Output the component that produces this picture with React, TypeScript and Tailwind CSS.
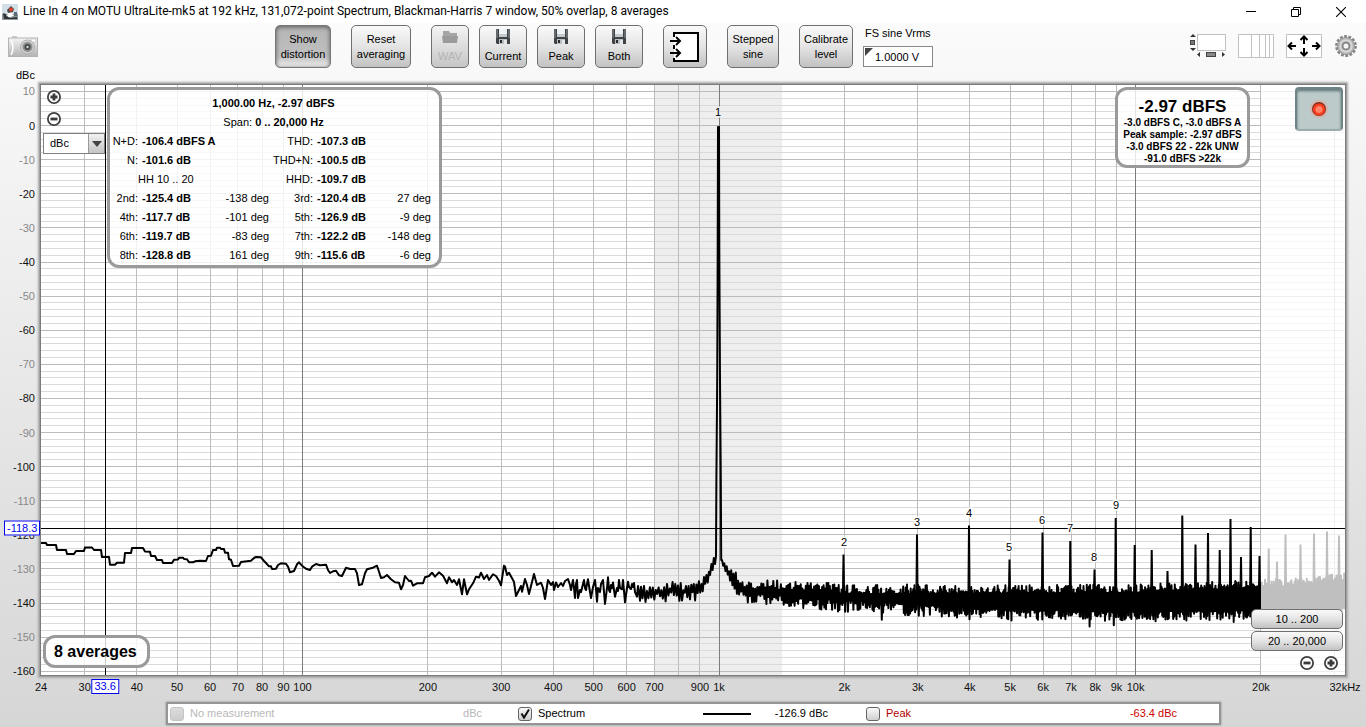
import type { ReactNode } from 'react';

const F_MIN = 23.56;
const F_MAX = 31830;
const DB_TOP = 11.9;
const DB_BOTTOM = -161.1;

// Trace data is kept in plot units: x 41..1345, y 85..675
const PLOT = { x: 41, y: 85, w: 1304, h: 590 };

const freqPct = (f: number) => `${(Math.log(f / F_MIN) / Math.log(F_MAX / F_MIN)) * 100}%`;
const dbPct = (db: number) => `${((DB_TOP - db) / (DB_TOP - DB_BOTTOM)) * 100}%`;
const xPct = (x: number) => `${((x - PLOT.x) / PLOT.w) * 100}%`;
const yPct = (y: number) => `${((y - PLOT.y) / PLOT.h) * 100}%`;

const CURSOR = { freq: 33.6, db: -118.1 };

const FREQ_LINES = [
  30, 40, 50, 60, 70, 80, 90, 100, 200, 300, 400, 500, 600, 700, 800, 900, 1000, 2000, 3000, 4000, 5000, 6000, 7000,
  8000, 9000, 10000, 20000, 30000,
];

const FREQ_LABELS: [number, string][] = [
  [F_MIN, '24'], [30, '30'], [40, '40'], [50, '50'], [60, '60'], [70, '70'], [80, '80'], [90, '90'], [100, '100'],
  [200, '200'], [300, '300'], [400, '400'], [500, '500'], [600, '600'], [700, '700'], [900, '900'], [1000, '1k'],
  [2000, '2k'], [3000, '3k'], [4000, '4k'], [5000, '5k'], [6000, '6k'], [7000, '7k'], [8000, '8k'], [9000, '9k'],
  [10000, '10k'], [20000, '20k'], [F_MAX, '32kHz'],
];

const DB_LINES = Array.from({ length: 86 }, (_, i) => 10 - i * 2);
const DB_LABELS = Array.from({ length: 18 }, (_, i) => 10 - i * 10);

const HARMONIC_LABELS: [number, number, string][] = [
  [718, 116, '1'], [844, 546, '2'], [917, 526, '3'], [969, 517, '4'], [1009, 551, '5'], [1042, 524, '6'],
  [1070, 532, '7'], [1094, 561, '8'], [1116, 509, '9'],
];

// Low end of the spectrum, up to about 640 Hz
const LOW_TRACE =
  '41,543 46,543 47,545 56,545 57,550 66,550 67,554 74,554 76,551 84,551 85,547.5 92,547.5 94,550 101,550 102,557 109,557 ' +
  '110,564.7 115,564.7 117,562.7 124,562.7 125,553 131,553 132,548 143,548 145,551.5 150,551.7 151,556 155,556 157,560 ' +
  '162,560 163,563 172,563 174,559.7 178,559.5 179,557.7 183,557.7 184,559 187,559.3 189,562.3 193,562.3 195,561.3 ' +
  '200,560.7 206,561 208,556 211,555.7 213,550 216,550 217,547.7 220,547.7 221,549 224,549 225,552.7 228,552.7 229,559.3 ' +
  '231,559.7 233,566 239,565.7 241,562 245,561.5 251,560.7 254,558 256,557 261,557.3 264,561 266,563 269,566.3 271,566.3 ' +
  '272,569 276,568.7 278,565 281,563.3 286,563.7 288,566.7 290,572.3 294,571 297,564.3 299,562.3 302,565.7 306,568.7 ' +
  '310,570 312,566.7 316,564 320,565.3 326,564.7 328,570 330,573 333,571.3 336,570.7 339,575.3 342,576 346,567.7 350,569 ' +
  '355,569 357,573.3 359,585 362,584.3 365,573.3 367,569.3 373,567.7 377,565.7 379,571.7 381,578 384,577.3 387,575 ' +
  '391,579.3 395,582.3 399,582.7 401,589.3 403,585 405,576 409,581 411,580.7 413,585.7 417,583.3 423,583.3 425,577.3 ' +
  '429,576 432,572.7 435,576.7 439,572.3 443,575.7 447,583.3 449,577.3 452,582.3 454,580 457,585 459,579.3 462,594.3 ' +
  '464,579.3 467,594.3 469,589.3 473,583.3 476,576.7 479,577.5 481,572.7 484,579 487,575 489,580 493,574.3 496,576 ' +
  '499,580.7 501,585.3 504,565.7 505,566.5 507,575 509,572.7 513,580 514,582 516,596 521,586 522,591.7 525,579 527,585 ' +
  '529,594 534,574 537,585 541,582.7 543,588 545,599 548,580 551,585 553,582 554,590 556,582.5 558,587 561,583 563,586 ' +
  '565,581 568,579 570,585 571,590 573,580 574,588 575,598 576,584 577,580 578,598 580,590 581,592 583,584 584,580 ' +
  '585,588 586,590 587,584 588,579.3 590,592 591,598 593,587 595,580 596,589 597,601.7 598,588 600,592 601,584 603,580 ' +
  '604,592 605,604 607,588 608,577.3 609,590 610,592 611,585 612,588 613,582.5 614,590 615,596.7 617,588 618,591 ' +
  '619,580 620,588 622,589.3 623,580 624,591 625,602.3 627,588 628,581.7 629,587 631,589 632,584 633,587 634,583 ' +
  '635,592 637,596.7 638,586 639,592 640,600.7';

const SPIKES: [number, number][] = [
  [843.5, 555], [917, 535], [969, 526], [1009.5, 560], [1042.5, 533], [1070.3, 541.5], [1094.5, 570], [1115.7, 518.5],
  [1134.7, 545.5], [1151.7, 550.5], [1167.5, 571.5], [1182.3, 516], [1195.5, 545], [1208, 533.5], [1219.7, 550.5],
  [1230.5, 519.5], [1241, 557.5], [1250.7, 527.5], [1259.5, 556.5], [1268.7, 549], [1277, 562], [1285.5, 535],
  [1300.5, 545], [1314, 534], [1327, 532], [1339, 536],
];

function noise(seed: number) {
  let s = seed;
  return () => {
    s = (s + 0x6d2b79f5) | 0;
    let t = Math.imul(s ^ (s >>> 15), 1 | s);
    t = (t + Math.imul(t ^ (t >>> 7), 61 | t)) ^ t;
    return ((t ^ (t >>> 14)) >>> 0) / 4294967296;
  };
}

function lerp(stops: [number, number][], x: number) {
  for (let i = 1; i < stops.length; i++) {
    const [x0, y0] = stops[i - 1];
    const [x1, y1] = stops[i];
    if (x <= x1) return y0 + ((y1 - y0) * (x - x0)) / (x1 - x0);
  }
  return stops[stops.length - 1][1];
}

const FLOOR_MID: [number, number][] = [
  [640, 592], [692, 591], [702, 587], [708, 577], [715, 560], [722, 562], [727, 570], [735, 581], [742, 590], [790, 593],
  [845, 597], [980, 601], [1130, 602], [1260, 599], [1310, 597], [1345, 594],
];
// Half height of the part that is always filled, and how far peaks reach past it
const FLOOR_CORE: [number, number][] = [
  [640, 0], [845, 3], [980, 7], [1130, 9], [1260, 11], [1345, 13],
];
const FLOOR_REACH: [number, number][] = [
  [640, 12], [698, 10], [712, 5], [724, 5], [740, 12], [845, 12], [980, 11], [1345, 9],
];
const FLOOR_STEP: [number, number][] = [
  [640, 1.5], [715, 1.2], [790, 0.9], [845, 0.7], [980, 0.55],
];

function buildNoiseFloor(from: number, to: number, seed: number) {
  const rnd = noise(seed);
  const pts: string[] = [];
  let side = -1;
  for (let x = from; x < to; x += lerp(FLOOR_STEP, x)) {
    const r = Math.pow(rnd(), x < 845 ? 1 : 1.6);
    const far = side > 0 && rnd() > 0.975 ? 3 + rnd() * 7 : 0;
    const reach = lerp(FLOOR_CORE, x) + r * lerp(FLOOR_REACH, x) * (side > 0 ? 1 : 0.85) + far;
    pts.push(`${x.toFixed(1)},${(lerp(FLOOR_MID, x) + side * reach).toFixed(1)}`);
    side = -side;
  }
  return pts.join(' ');
}

const PEAK = '716,556 716.4,480 717.2,380 717.7,250 718,127 719,127 719.3,250 720,380 720.8,480 721.2,560';
const TRACE = `${LOW_TRACE} ${buildNoiseFloor(641, 715, 11)} ${PEAK} ${buildNoiseFloor(722, 1346, 29)}`;

const buttonBase =
  'shrink-0 rounded-[5px] border border-[#6f6f6f] bg-gradient-to-b from-[#fafafa] via-[#e4e4e4] to-[#c2c2c2] text-center text-[11px] leading-[15px] text-black';

function ToolButton({ children, className }: { children: ReactNode; className: string }) {
  return (
    <button type="button" className={`${buttonBase} h-[43px] ${className}`}>
      {children}
    </button>
  );
}

function FloppyIcon() {
  return (
    <svg viewBox="0 0 16 16" className="mx-auto h-4 w-4" aria-hidden="true">
      <path d="M1 0h14v15H2l-1-1z" fill="#3f4346" />
      <path d="M1 0h2v9H1zM13 0h2v9h-2z" fill="#64696d" />
      <rect x="4" y="0" width="8" height="8" fill="#eef2f4" />
      <rect x="4" y="5" width="8" height="3" fill="#c3cbd0" />
      <rect x="4" y="10" width="8" height="5" fill="#b9bec2" />
      <rect x="5" y="11" width="2" height="3" fill="#2c2c2c" />
      <rect x="9" y="11" width="3" height="4" fill="#e4e6e8" />
    </svg>
  );
}

function FolderIcon() {
  return (
    <svg viewBox="0 0 18 16" className="mx-auto h-4 w-[18px]" aria-hidden="true">
      <path d="M2 2h6l1 2h7v9H2z" fill="#a6a6a6" />
      <path d="M1 7h16l-1 7H2z" fill="#9b9b9b" />
    </svg>
  );
}

function ZoomButton({ plus, label }: { plus?: boolean; label: string }) {
  return (
    <button type="button" aria-label={label} className="block h-[14px] w-[14px]">
      <svg viewBox="0 0 14 14" className="h-[14px] w-[14px]">
        <circle cx="7" cy="7" r="6.100" fill="#fff" stroke="#404040" strokeWidth="1.800" />
        <path d={plus ? 'M3.5 7h7M7 3.5v7' : 'M3.5 7h7'} stroke="#3a3a3a" strokeWidth="2.800" />
      </svg>
    </button>
  );
}

function TitleBar() {
  return (
    <header className="flex h-[23px] shrink-0 items-center bg-white pl-[2px]">
      <svg viewBox="0 0 16 16" className="h-4 w-4" aria-hidden="true">
        <rect width="16" height="16" fill="#d3dfe6" />
        <path d="M0 10h16v6H0z" fill="#8b989f" />
        <path d="M5 12 8 4l2 1-1 3 3 4z" fill="#fff" />
        <path d="M5 6 9 2l3 3-1 3-5 1z" fill="#4a4a4a" />
        <circle cx="9" cy="5.500" r="2" fill="#e0402a" />
        <path d="M1 9l3 1v2l4 2 7-1v2H2z" fill="#333" />
        <path d="M12 8h3v4h-3z" fill="#5c6a72" />
        <path d="M6 9h4v4H6z" fill="#fff" />
      </svg>
      <h1 className="ml-[5px] flex-1 truncate font-[Roboto,sans-serif] text-[12px] leading-[23px] font-normal text-black">
        Line In 4 on MOTU UltraLite-mk5 at 192 kHz, 131,072-point Spectrum, Blackman-Harris 7 window, 50% overlap, 8
        averages
      </h1>
      <div className="flex h-full">
        <button type="button" aria-label="Minimize" className="flex w-[45px] items-center justify-center">
          <svg viewBox="0 0 10 10" className="h-[10px] w-[10px]">
            <path d="M0 4.500h10" stroke="#000" />
          </svg>
        </button>
        <button type="button" aria-label="Restore" className="flex w-[45px] items-center justify-center">
          <svg viewBox="0 0 10 10" className="h-[10px] w-[10px]" fill="none" stroke="#000">
            <path d="M.5 2.5h7v7h-7zM2.5 2.5v-2h7v7h-2" />
          </svg>
        </button>
        <button type="button" aria-label="Close" className="flex w-12 items-center justify-center pr-[2px]">
          <svg viewBox="0 0 10 10" className="h-[10px] w-[10px]" fill="none" stroke="#000" strokeWidth="1.1">
            <path d="M0 0l10 10M10 0L0 10" />
          </svg>
        </button>
      </div>
    </header>
  );
}

function Toolbar() {
  return (
    <div className="flex h-[46px] shrink-0 items-start pt-[2px] pr-[9px] pl-2">
      <button type="button" aria-label="Capture image" className="mt-[10px] shrink-0">
        <svg viewBox="0 0 30 23" className="h-[23px] w-[30px]">
          <defs>
            <linearGradient id="body" x1="0" y1="0" x2="0" y2="1">
              <stop offset="0" stopColor="#f4f4f4" />
              <stop offset="1" stopColor="#b4b4b4" />
            </linearGradient>
          </defs>
          <path d="M4 3V1h5v2z" fill="#ccc" />
          <rect x=".5" y="3" width="29" height="18.500" fill="url(#body)" stroke="#b4b4b4" />
          <path d="M3 5q4 8 0 15" fill="none" stroke="#fff" strokeWidth="1.5" />
          <rect x="23" y="4" width="5" height="3" fill="#fff" stroke="#aaa" strokeWidth=".5" />
          <circle cx="19.500" cy="12" r="7" fill="#cfcfcf" stroke="#b0b0b0" />
          <circle cx="19.500" cy="12" r="5" fill="#8f8f8f" />
          <circle cx="19.500" cy="12" r="3" fill="#434848" />
          <circle cx="19.500" cy="12" r="1.200" fill="#cfd6d6" />
        </svg>
      </button>

      <button
        type="button"
        aria-pressed="true"
        className="ml-[237px] h-[43px] w-14 shrink-0 rounded-[5px] border border-[#777] bg-gradient-to-b from-[#b4b4b4] from-0% via-[#c0c0c0] via-75% to-[#f0f0f0] to-100% text-center text-[11px] leading-[15px] text-black shadow-[inset_0_1px_4px_#555]"
      >
        Show
        <br />
        distortion
      </button>
      <ToolButton className="ml-5 w-[60px]">
        Reset
        <br />
        averaging
      </ToolButton>
      <button
        type="button"
        disabled
        className="ml-5 h-[43px] w-[38px] shrink-0 rounded-[5px] border border-[#6f6f6f] bg-gradient-to-b from-[#f4f4f4] to-[#c6c6c6] text-center text-[11px] leading-[15px] text-[#b4b4b4]"
      >
        <FolderIcon />
        <span className="mt-1 block">WAV</span>
      </button>
      <ToolButton className="ml-[10px] w-12">
        <FloppyIcon />
        <span className="mt-1 block">Current</span>
      </ToolButton>
      <ToolButton className="ml-[10px] w-12">
        <FloppyIcon />
        <span className="mt-1 block">Peak</span>
      </ToolButton>
      <ToolButton className="ml-[10px] w-12">
        <FloppyIcon />
        <span className="mt-1 block">Both</span>
      </ToolButton>
      <button type="button" aria-label="Input routing" className={`${buttonBase} ml-5 flex h-[43px] w-11 items-center justify-center`}>
        <svg viewBox="0 0 30 32" className="h-8 w-[30px]" fill="none" stroke="#000" strokeWidth="2">
          <rect x="4" y="2" width="25" height="28" fill="#fff" stroke="none" />
          <path d="M4 6V2h24v28H4v-3M4 14v4" />
          <path d="M0 10h10M6 6l4 4-4 4M0 22h10M6 18l4 4-4 4" />
        </svg>
      </button>
      <ToolButton className="ml-5 w-[52px]">
        Stepped
        <br />
        sine
      </ToolButton>
      <ToolButton className="ml-5 w-[54px]">
        Calibrate
        <br />
        level
      </ToolButton>
      <div className="ml-[10px] w-[70px] shrink-0">
        <label htmlFor="fs-sine" className="block pl-[2px] text-[11px] leading-4 whitespace-nowrap text-black">
          FS sine Vrms
        </label>
        <div className="relative mt-[5px]">
          <input
            id="fs-sine"
            defaultValue="1.0000 V"
            className="block h-[21px] w-full border border-[#888] bg-white pl-[11px] text-[11px] text-black"
          />
          <svg viewBox="0 0 8 8" className="absolute top-[2px] left-[2px] h-2 w-2" aria-hidden="true">
            <path d="M0 0h8L0 8z" fill="#444" />
          </svg>
        </div>
      </div>

      <div className="ml-auto flex items-start pt-2">
        <button type="button" aria-label="Toggle scrollbars">
          <svg viewBox="0 0 37 25" className="h-[25px] w-[37px]">
            <rect x="8.500" y="1.500" width="28" height="16" fill="#fff" stroke="#c2c2c2" />
            <path d="M1 4l3-3 3 3zM1 15l3 3 3-3zM11 19v5l-3-2.500zM33 19v5l3-2.500z" fill="#333" />
            <rect x="1.500" y="7.500" width="4" height="4" fill="#777" stroke="#444" />
            <rect x="17.500" y="19.500" width="9" height="4" fill="#888" stroke="#444" />
          </svg>
        </button>
        <button type="button" aria-label="Frequency axis" className="ml-3">
          <svg viewBox="0 0 36 25" className="h-[25px] w-9">
            <path d="M.5 1.500h35v23H.5z" fill="#fff" stroke="#c2c2c2" />
            <path d="M13.500 1v23M21.500 1v23M27.500 1v23M31.500 1v23" stroke="#c2c2c2" />
          </svg>
        </button>
        <button type="button" aria-label="Graph limits" className="ml-3">
          <svg viewBox="0 0 36 25" className="h-[25px] w-9">
            <path d="M.5 1.500h35v23H.5z" fill="#fff" stroke="#c2c2c2" />
            <path
              d="M10 13H3M6 9.500L2.500 13 6 16.500M26 13h7M30 9.500L33.500 13 30 16.500M18 11V4M14.500 7L18 3.500 21.500 7M18 15v7M14.500 19l3.500 3.500L21.500 19"
              fill="none"
              stroke="#000"
              strokeWidth="2"
            />
          </svg>
        </button>
        <button type="button" aria-label="Controls" className="mt-[2px] ml-[13px]">
          <svg viewBox="0 0 22 22" className="h-[22px] w-[22px]">
            <circle cx="11" cy="11" r="9.600" fill="none" stroke="#858585" strokeWidth="2.600" strokeDasharray="2.800 1.510" />
            <circle cx="11" cy="11" r="8.600" fill="#b4b4b4" stroke="#8d8d8d" strokeWidth=".8" />
            <circle cx="11" cy="11" r="5.800" fill="none" stroke="#d9d9d9" strokeWidth="1.800" />
            <circle cx="11" cy="11" r="3.300" fill="#f4f4f4" stroke="#828282" strokeWidth="1.500" />
          </svg>
        </button>
      </div>
    </div>
  );
}

function SpectrumGraph() {
  return (
    <svg className="absolute inset-0 h-full w-full" role="img" aria-label="Spectrum">
      <rect x={xPct(654)} y="0" width={`${(128 / PLOT.w) * 100}%`} height="100%" fill="#eeeeee" />
      <g shapeRendering="crispEdges">
        {DB_LINES.map((db) => (
          <line key={db} x1="0" x2="100%" y1={dbPct(db)} y2={dbPct(db)} stroke={db % 10 === 0 ? '#bcbcbc' : '#dadada'} />
        ))}
        {FREQ_LINES.map((f) => (
          <line
            key={f}
            x1={freqPct(f)}
            x2={freqPct(f)}
            y1="0"
            y2="100%"
            stroke={f === 100 || f === 1000 || f === 10000 ? '#7c7c7c' : '#bcbcbc'}
          />
        ))}
      </g>
      <svg viewBox="41 85 1304 590" preserveAspectRatio="none" width="100%" height="100%" x="0" y="0">
        <polyline points={TRACE} fill="none" stroke="#000" strokeWidth="2" strokeLinejoin="round" />
        {SPIKES.map(([x, y]) => (
          <path key={x} d={`M${x - 0.4} ${y}h.8L${x + 1} 600h-2z`} fill="#000" stroke="#000" strokeWidth="1.2" />
        ))}
      </svg>
      {/* Outside the distortion span everything is faded */}
      <rect x={xPct(1261)} y="0" width="10%" height="100%" fill="#fff" fillOpacity="0.75" />
      <g shapeRendering="crispEdges" stroke="#000">
        <line x1={freqPct(CURSOR.freq)} x2={freqPct(CURSOR.freq)} y1="0" y2="100%" />
        <line x1="0" x2="100%" y1={dbPct(CURSOR.db)} y2={dbPct(CURSOR.db)} />
      </g>
      <g fontSize="11" textAnchor="middle" paintOrder="stroke" strokeWidth="3">
        {HARMONIC_LABELS.map(([x, y, n]) => (
          <text key={n} x={xPct(x)} y={yPct(y)} fill="#000" stroke={n === '1' ? '#eeeeee' : '#ffffff'}>
            {n}
          </text>
        ))}
      </g>
    </svg>
  );
}

const HARMONIC_ROWS = [
  ['N+D:', '-106.4 dBFS A', '', 'THD:', '-107.3 dB', ''],
  ['N:', '-101.6 dB', '', 'THD+N:', '-100.5 dB', ''],
  ['', 'HH 10 .. 20', '', 'HHD:', '-109.7 dB', ''],
  ['2nd:', '-125.4 dB', '-138 deg', '3rd:', '-120.4 dB', '27 deg'],
  ['4th:', '-117.7 dB', '-101 deg', '5th:', '-126.9 dB', '-9 deg'],
  ['6th:', '-119.7 dB', '-83 deg', '7th:', '-122.2 dB', '-148 deg'],
  ['8th:', '-128.8 dB', '161 deg', '9th:', '-115.6 dB', '-6 deg'],
];

function DistortionPanel() {
  return (
    <div className="absolute top-[2px] left-[66px] w-[335px] rounded-xl border-[3px] border-[#9a9a9a] bg-white/80 pt-1 text-[11px] leading-[19px] text-black">
      <p className="pr-[2px] text-center font-bold">1,000.00 Hz, -2.97 dBFS</p>
      <p className="pr-[2px] text-center">
        Span: <b>0 .. 20,000 Hz</b>
      </p>
      <table className="table-fixed border-collapse whitespace-nowrap">
        <colgroup>
          <col className="w-7" />
          <col className="w-[82px]" />
          <col className="w-[49px]" />
          <col className="w-11" />
          <col className="w-[72px]" />
          <col className="w-[46px]" />
        </colgroup>
        <tbody>
          {HARMONIC_ROWS.map(([name, value, phase, name2, value2, phase2]) => (
            <tr key={name2}>
              <td className="p-0 text-right">{name}</td>
              <td className={name ? 'p-0 pl-1 font-bold' : 'p-0'}>{value}</td>
              <td className="p-0 text-right">{phase}</td>
              <td className="p-0 text-right">{name2}</td>
              <td className="p-0 pl-1 font-bold">{value2}</td>
              <td className="p-0 text-right">{phase2}</td>
            </tr>
          ))}
        </tbody>
      </table>
    </div>
  );
}

function LevelPanel() {
  return (
    <div className="absolute top-[2px] right-[95px] w-[135px] rounded-xl border-[3px] border-[#9a9a9a] bg-white/80 pt-[6px] text-center text-[10px] leading-3 font-bold whitespace-nowrap text-black">
      <p className="text-[17px] leading-[21px]">-2.97 dBFS</p>
      <p>-3.0 dBFS C, -3.0 dBFS A</p>
      <p>Peak sample: -2.97 dBFS</p>
      <p>-3.0 dBFS 22 - 22k UNW</p>
      <p>-91.0 dBFS &gt;22k</p>
    </div>
  );
}

function Plot() {
  return (
    <div className="relative m-[2px] min-h-[420px] flex-1 border border-[#7c7c7c] bg-white shadow-[0_0_0_1px_#a0a0a0,0_0_2px_2px_#aaaaaa]">
      <SpectrumGraph />
      <div className="absolute top-[5px] left-[6px] flex flex-col gap-2">
        <ZoomButton plus label="Zoom in vertically" />
        <ZoomButton label="Zoom out vertically" />
      </div>
      <div className="absolute top-12 left-[2px] h-[21px] w-[62px]">
        <select
          aria-label="Y axis units"
          className="block h-full w-full appearance-none border border-[#808080] bg-white pl-[6px] text-[11px] text-black"
        >
          <option>dBc</option>
        </select>
        <span className="pointer-events-none absolute top-px right-px flex h-[19px] w-4 items-center justify-center border-l border-[#999] bg-gradient-to-b from-[#f2f2f2] to-[#c4c4c4]">
          <svg viewBox="0 0 10 6" className="h-[6px] w-[10px]">
            <path d="M0 0h10L5 6z" fill="#444" />
          </svg>
        </span>
      </div>
      <DistortionPanel />
      <LevelPanel />
      <button
        type="button"
        aria-label="Record"
        className="absolute top-[2px] right-[2px] flex h-11 w-12 items-center justify-center rounded border-2 border-[#6f8487] border-b-[#9cacae] bg-[#bccaca] shadow-[inset_0_2px_3px_#5f7477]"
      >
        <svg viewBox="0 0 20 20" className="h-5 w-5">
          <circle cx="10" cy="10" r="9" fill="#f0a090" fillOpacity=".5" />
          <circle cx="10" cy="10" r="7" fill="#7a3020" />
          <circle cx="10" cy="10.500" r="6" fill="#ff3c1e" />
          <circle cx="10" cy="10.500" r="3.500" fill="#ff8468" />
        </svg>
      </button>
      <p className="absolute bottom-[7px] left-[2px] rounded-xl border-[3px] border-[#9a9a9a] bg-white/80 pr-[10px] pl-2 text-[16px] leading-[27px] font-bold text-black">
        8 averages
      </p>
      <div className="absolute right-[2px] bottom-[5px] w-[92px]">
        <button type="button" className={`${buttonBase} mb-[2px] block h-5 w-full`}>
          10 .. 200
        </button>
        <button type="button" className={`${buttonBase} block h-5 w-full`}>
          20 .. 20,000
        </button>
        <div className="mt-[5px] flex justify-end gap-[10px] pr-[5px]">
          <ZoomButton label="Zoom out horizontally" />
          <ZoomButton plus label="Zoom in horizontally" />
        </div>
      </div>
    </div>
  );
}

function DbAxis() {
  return (
    <div className="relative my-[3px] w-[38px] shrink-0">
      <svg className="absolute inset-0 h-full w-full overflow-visible" fontSize="11" textAnchor="end">
        {DB_LABELS.map((db) => (
          <text key={db} x="35" y={dbPct(db)} dy="4" fill={db % 20 === 0 ? '#111' : '#888'}>
            {db}
          </text>
        ))}
      </svg>
      <output
        className="absolute left-1 z-10 -translate-y-1/2 border border-[#0000ee] bg-white px-[2px] text-[11px] leading-[13px] text-[#0000ee]"
        style={{ top: dbPct(CURSOR.db) }}
      >
        -118.3
      </output>
    </div>
  );
}

function FrequencyAxis() {
  return (
    <div className="relative mr-[21px] ml-[41px] h-6 shrink-0">
      <svg className="absolute inset-0 h-full w-full overflow-visible" fontSize="11" textAnchor="middle">
        {FREQ_LABELS.map(([f, label]) => (
          <text key={label} x={freqPct(f)} y="13" fill="#111">
            {label}
          </text>
        ))}
      </svg>
      <output
        className="absolute top-px -translate-x-1/2 border border-[#0000ee] bg-white px-[2px] text-[11px] leading-[13px] text-[#0000ee]"
        style={{ left: freqPct(CURSOR.freq) }}
      >
        33.6
      </output>
    </div>
  );
}

function TraceToggle({ id, label, checked, disabled }: { id: string; label: string; checked?: boolean; disabled?: boolean }) {
  return (
    <>
      <span className="relative h-[14px] w-[14px] shrink-0">
        <input
          id={id}
          type="checkbox"
          defaultChecked={checked}
          disabled={disabled}
          className="peer block h-[14px] w-[14px] appearance-none rounded-[3px] border border-[#666] bg-gradient-to-b from-[#fafafa] to-[#cfcfcf] disabled:border-[#c4c4c4] disabled:from-[#dcdcdc] disabled:to-[#cccccc]"
        />
        <svg viewBox="0 0 14 14" className="pointer-events-none absolute inset-0 hidden h-[14px] w-[14px] peer-checked:block">
          <path d="M3.500 6.500L6 10.500 11 2.500" fill="none" stroke="#111" strokeWidth="2" />
        </svg>
      </span>
      <label htmlFor={id} className="ml-[6px]">
        {label}
      </label>
    </>
  );
}

function Legend() {
  return (
    <div className="mr-[145px] mb-[2px] ml-[166px] grid h-[23px] shrink-0 grid-cols-[350fr_348fr_353fr] border-2 border-[#959595] bg-white text-[11px] text-black shadow-[0_0_2px_#888]">
      <div className="flex items-center pr-9 pl-[2px] text-[#b8b8b8]">
        <TraceToggle id="trace-measurement" label="No measurement" disabled />
        <span className="ml-auto">dBc</span>
      </div>
      <div className="flex items-center pr-[38px]">
        <TraceToggle id="trace-spectrum" label="Spectrum" checked />
        <span className="ml-auto h-[2px] w-12 bg-black" />
        <span className="ml-6">-126.9 dBc</span>
      </div>
      <div className="flex items-center pr-[42px] text-[#b00000]">
        <TraceToggle id="trace-peak" label="Peak" />
        <span className="ml-auto text-[#cc0000]">-63.4 dBc</span>
      </div>
    </div>
  );
}

export default function App() {
  return (
    <div className="flex min-h-screen flex-col bg-[#d8d8d8] font-['Liberation_Sans',Arial,sans-serif]">
      <TitleBar />
      <main className="flex flex-1 flex-col bg-gradient-to-b from-[#fbfbfb] to-[#d6d6d6]">
        <Toolbar />
        <p className="h-[13px] shrink-0 pl-4 text-[11px] leading-[13px] text-black">dBc</p>
        <div className="flex flex-1 pr-[18px]">
          <DbAxis />
          <Plot />
        </div>
        <FrequencyAxis />
        <Legend />
      </main>
    </div>
  );
}
